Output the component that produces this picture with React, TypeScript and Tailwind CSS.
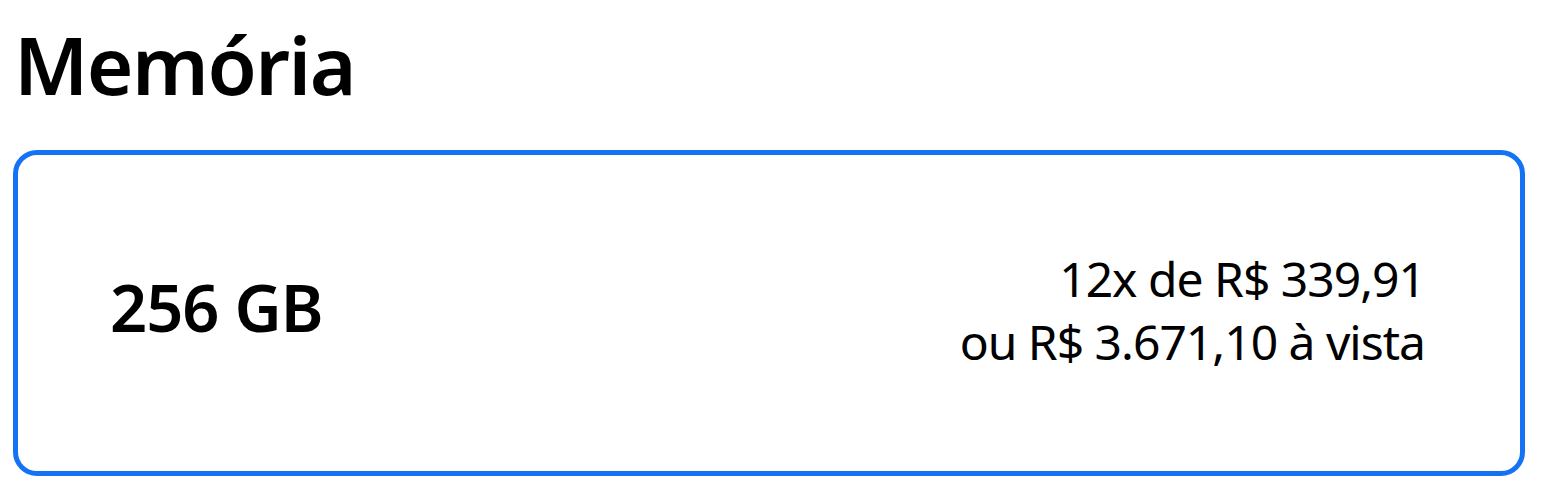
export default function App() {
  return (
    <div className="w-[1543px] h-[500px] bg-white pt-[14px] pl-[13px]" style={{ fontFamily: '"Noto Sans", "Open Sans", sans-serif' }}>
      <h2 className="pl-[1px] text-[80px] leading-[100px] font-semibold text-black tracking-[-1.5px]">Memória</h2>
      <div className="mt-[36px] w-[1512px] h-[326px] border-[5px] border-[#1473f5] rounded-[24px] flex items-center justify-between pl-[92px] pr-[95px]">
        <div className="text-[65px] font-semibold text-black leading-none tracking-[-1px] -mt-[12px]">256 GB</div>
        <div className="text-right text-[48px] leading-[63px] text-black tracking-[-1px] -mt-[6px]">
          <div>12x de R$ 339,91</div>
          <div>ou R$ 3.671,10 à vista</div>
        </div>
      </div>
    </div>
  );
}
